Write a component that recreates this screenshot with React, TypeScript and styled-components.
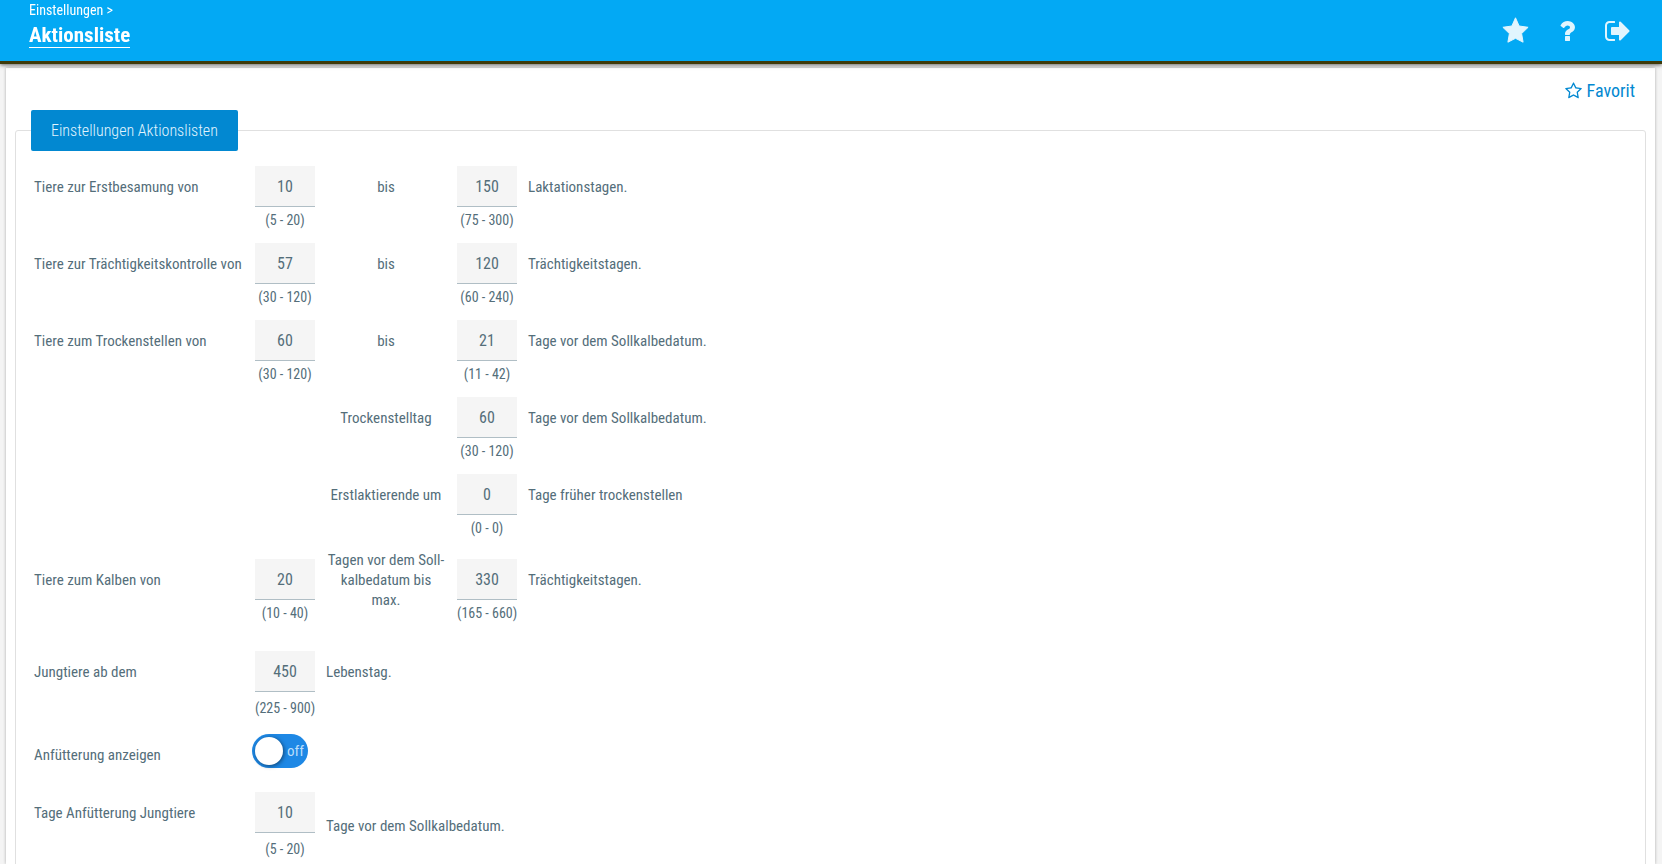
import React, { useState } from 'react';
import styled, { createGlobalStyle } from 'styled-components';

const GlobalStyle = createGlobalStyle`
  * { box-sizing: border-box; }
  body {
    margin: 0;
    background: #f4f4f4;
    color: #546e7a;
    font: 15px/20px "Roboto Condensed", Roboto, sans-serif;
  }
`;

const Page = styled.div`
  display: flex;
  flex-direction: column;
  height: 100vh;
`;

const TopBar = styled.header`
  display: flex;
  flex: none;
  justify-content: space-between;
  height: 64px;
  padding: 0 32px 0 29px;
  background: #03a9f4;
  border-bottom: 3px solid #3e3a0a;
  box-shadow: 0 1px 4px rgba(0, 0, 0, 0.6);
  z-index: 1;
`;

const Breadcrumb = styled.nav`
  display: flex;
  flex-direction: column;
  align-items: flex-start;
`;

const ParentLink = styled.a`
  color: #fff;
  font-size: 14px;
  text-decoration: none;
`;

const PageTitle = styled.h1`
  margin: 4px 0 0;
  border-bottom: 1px solid #fff;
  color: #fff;
  font-size: 21px;
  line-height: 23px;
  font-weight: 700;
`;

const Actions = styled.div`
  display: flex;
  align-items: center;
  gap: 30px;
`;

const IconButton = styled.button`
  display: flex;
  padding: 0;
  border: 0;
  background: none;
  color: #e1f5fe;
  cursor: pointer;
`;

const Panel = styled.main`
  flex: 1;
  min-height: 0;
  margin: 4px 7px 0 6px;
  padding: 13px 9px 0;
  overflow-y: auto;
  scrollbar-width: none;
  background: #fff;
  box-shadow: 0 0 3px rgba(0, 0, 0, 0.3);
`;

const PanelTools = styled.div`
  display: flex;
  justify-content: flex-end;
  padding-right: 11px;
`;

const FavoriteButton = styled.button`
  display: flex;
  align-items: center;
  gap: 5px;
  padding: 0;
  border: 0;
  background: none;
  color: #0288d1;
  font: inherit;
  font-size: 18px;
  line-height: 20px;
  cursor: pointer;
`;

const Group = styled.fieldset`
  min-height: calc(100% - 24px);
  margin: 9px 0 0;
  padding: 15px 18px 24px;
  border: 1px solid #e0e0e0;
  border-radius: 3px;
`;

const GroupTitle = styled.legend`
  margin-left: -3px;
  padding: 1px 20px 0;
  border-radius: 2px;
  background: #0288d1;
  color: #e1f5fe;
  font-size: 16px;
  font-weight: 300;
  line-height: 40px;
`;

const Row = styled.div<{ $space?: number; $short?: boolean }>`
  display: grid;
  grid-template-columns: ${(p) => (p.$short ? '221px 60px 1fr' : '221px 60px 142px 60px 1fr')};
  margin-top: ${(p) => p.$space ?? 13}px;

  &:first-of-type { margin-top: 0; }
`;

const Label = styled.label`
  display: flex;
  align-items: center;
  height: 41px;
`;

const Between = styled(Label)`
  justify-content: center;
  padding: 0 10px;
  text-align: center;
`;

const Suffix = styled.span<{ $fill?: boolean }>`
  display: flex;
  align-items: center;
  height: ${(p) => (p.$fill ? '100%' : '41px')};
  padding-left: 11px;
`;

const Field = styled.div<{ $loose?: boolean }>`
  display: flex;
  flex-direction: column;
  gap: ${(p) => (p.$loose ? 6 : 3)}px;
`;

const NumberInput = styled.input`
  width: 60px;
  height: 41px;
  padding: 0;
  border: 0;
  border-bottom: 1px solid #b0bec5;
  border-radius: 0;
  background: #f5f5f5;
  color: #546e7a;
  font: inherit;
  font-size: 16px;
  text-align: center;
  outline: none;
`;

const Range = styled.span`
  font-size: 14px;
  text-align: center;
  white-space: nowrap;
`;

const Toggle = styled.span`
  display: grid;
  align-items: center;
  width: 56px;
  height: 34px;
  margin-left: -3px;

  > * { grid-area: 1 / 1; }
`;

const ToggleInput = styled.input`
  appearance: none;
  width: 56px;
  height: 34px;
  margin: 0;
  padding: 3px;
  border-radius: 17px;
  background: #1e88e5;
  cursor: pointer;

  &::before {
    content: '';
    display: block;
    width: 28px;
    height: 28px;
    border-radius: 50%;
    background: #fff;
    box-shadow: 1px 1px 4px rgba(0, 0, 0, 0.5);
  }
  &:checked::before { margin-left: 22px; }
`;

const ToggleText = styled.span<{ $on: boolean }>`
  justify-self: ${(p) => (p.$on ? 'start' : 'end')};
  padding: 0 4px;
  color: #bbdefb;
  pointer-events: none;
`;

const StarIcon = () => (
  <svg width="27" height="28" viewBox="0 0 27 28" fill="currentColor" stroke="currentColor" strokeLinejoin="round" aria-hidden="true">
    <path d="M13.500 .8 17.100 9 26.100 10.300 19.600 16.600 21.100 25.200 13.500 21.300 5.900 25.200 7.400 16.600 .9 10.300 9.900 9z" />
  </svg>
);

const QuestionIcon = () => (
  <svg width="16" height="28" viewBox="0 0 1024 1792" fill="currentColor" aria-hidden="true">
    <path d="M704 1256v240q0 16-12 28t-28 12h-240q-16 0-28-12t-12-28v-240q0-16 12-28t28-12h240q16 0 28 12t12 28zM1020 656q0 54-15.500 101t-35 76.500-55 59.500-57.500 43.500-61 35.500q-41 23-68.500 65t-27.500 67q0 17-12 32.500t-28 15.500h-240q-15 0-25.500-18.500t-10.500-37.500v-45q0-83 65-156.500t143-108.500q59-27 84-56t25-76q0-42-46.500-74t-107.500-32q-65 0-108 29-35 25-107 115-13 16-31 16-12 0-25-8l-164-125q-13-10-15.500-25t5.500-28q160-266 464-266 80 0 161 31t146 83 106 127.500 41 158.500z" />
  </svg>
);

const SignOutIcon = () => (
  <svg width="25" height="28" viewBox="0 0 1600 1792" fill="currentColor" aria-hidden="true">
    <path d="M640 1440q0 4 1 20t.5 26.500-3 23.500-10 19.500-20.500 6.500h-320q-119 0-203.500-84.500t-84.500-203.500v-704q0-119 84.500-203.500t203.500-84.500h320q13 0 22.500 9.500t9.500 22.500q0 4 1 20t.5 26.500-3 23.500-10 19.500-20.500 6.500h-320q-66 0-113 47t-47 113v704q0 66 47 113t113 47h312l11.500 1t11.500 3 8 5.500 7 9 2 13.500zM1568 896q0 26-19 45l-544 544q-19 19-45 19t-45-19-19-45v-288h-448q-26 0-45-19t-19-45v-384q0-26 19-45t45-19h448v-288q0-26 19-45t45-19 45 19l544 544q19 19 19 45z" />
  </svg>
);

const StarOutlineIcon = () => (
  <svg width="17" height="18" viewBox="0 0 1664 1792" fill="currentColor" aria-hidden="true">
    <path d="M1137 1004l306-297-422-62-189-382-189 382-422 62 306 297-73 421 378-199 377 199zM1664 647q0 22-26 48l-363 354 86 500q1 7 1 20 0 50-41 50-19 0-40-12l-449-236-449 236q-22 12-40 12-21 0-31.500-14.500t-10.500-35.500q0-6 2-20l86-500-364-354q-25-27-25-48 0-37 56-46l502-73 225-455q19-41 49-41t49 41l225 455 502 73q56 9 56 46z" />
  </svg>
);

interface NumberFieldProps {
  id: string;
  value: string;
  range: string;
  loose?: boolean;
}

const NumberField = ({ id, value, range, loose }: NumberFieldProps) => (
  <Field $loose={loose}>
    <NumberInput id={id} type="text" inputMode="numeric" defaultValue={value} aria-describedby={`${id}-range`} />
    <Range id={`${id}-range`}>({range})</Range>
  </Field>
);

type Value = [value: string, range: string];

interface Setting {
  id: string;
  label?: string;
  from?: Value;
  between: string;
  to: Value;
  suffix: string;
  space?: number;
}

const settings: Setting[] = [
  { id: 'besamung', label: 'Tiere zur Erstbesamung von', from: ['10', '5 - 20'], between: 'bis', to: ['150', '75 - 300'], suffix: 'Laktationstagen.' },
  { id: 'kontrolle', label: 'Tiere zur Trächtigkeitskontrolle von', from: ['57', '30 - 120'], between: 'bis', to: ['120', '60 - 240'], suffix: 'Trächtigkeitstagen.' },
  { id: 'trocken', label: 'Tiere zum Trockenstellen von', from: ['60', '30 - 120'], between: 'bis', to: ['21', '11 - 42'], suffix: 'Tage vor dem Sollkalbedatum.' },
  { id: 'trockentag', between: 'Trockenstelltag', to: ['60', '30 - 120'], suffix: 'Tage vor dem Sollkalbedatum.' },
  { id: 'erstlaktierende', between: 'Erstlaktierende um', to: ['0', '0 - 0'], suffix: 'Tage früher trockenstellen' },
  { id: 'kalben', label: 'Tiere zum Kalben von', from: ['20', '10 - 40'], between: 'Tagen vor dem Soll\u00ADkalbedatum bis max.', to: ['330', '165 - 660'], suffix: 'Trächtigkeitstagen.', space: 21 },
];

export default function App() {
  const [feeding, setFeeding] = useState(false);

  return (
    <Page>
      <GlobalStyle />
      <TopBar>
        <Breadcrumb>
          <ParentLink href="#einstellungen">Einstellungen &gt;</ParentLink>
          <PageTitle>Aktionsliste</PageTitle>
        </Breadcrumb>
        <Actions>
          <IconButton aria-label="Favoriten"><StarIcon /></IconButton>
          <IconButton aria-label="Hilfe"><QuestionIcon /></IconButton>
          <IconButton aria-label="Abmelden"><SignOutIcon /></IconButton>
        </Actions>
      </TopBar>
      <Panel>
        <PanelTools>
          <FavoriteButton><StarOutlineIcon />Favorit</FavoriteButton>
        </PanelTools>
        <Group>
          <GroupTitle>Einstellungen Aktionslisten</GroupTitle>
          {settings.map(({ id, label, from, between, to, suffix, space }) => (
            <Row key={id} $space={space}>
              {label ? <Label htmlFor={`${id}-von`}>{label}</Label> : <span />}
              {from ? <NumberField id={`${id}-von`} value={from[0]} range={from[1]} /> : <span />}
              <Between htmlFor={`${id}-bis`}>{between}</Between>
              <NumberField id={`${id}-bis`} value={to[0]} range={to[1]} />
              <Suffix>{suffix}</Suffix>
            </Row>
          ))}
          <Row $short $space={28}>
            <Label htmlFor="jungtiere">Jungtiere ab dem</Label>
            <NumberField id="jungtiere" value="450" range="225 - 900" loose />
            <Suffix>Lebenstag.</Suffix>
          </Row>
          <Row $short $space={16}>
            <Label htmlFor="anfuetterung">Anfütterung anzeigen</Label>
            <Toggle>
              <ToggleInput
                id="anfuetterung"
                type="checkbox"
                role="switch"
                checked={feeding}
                onChange={(e) => setFeeding(e.target.checked)}
              />
              <ToggleText $on={feeding}>{feeding ? 'on' : 'off'}</ToggleText>
            </Toggle>
          </Row>
          <Row $short $space={17}>
            <Label htmlFor="anfuetterung-tage">Tage Anfütterung Jungtiere</Label>
            <NumberField id="anfuetterung-tage" value="10" range="5 - 20" loose />
            <Suffix $fill>Tage vor dem Sollkalbedatum.</Suffix>
          </Row>
        </Group>
      </Panel>
    </Page>
  );
}
